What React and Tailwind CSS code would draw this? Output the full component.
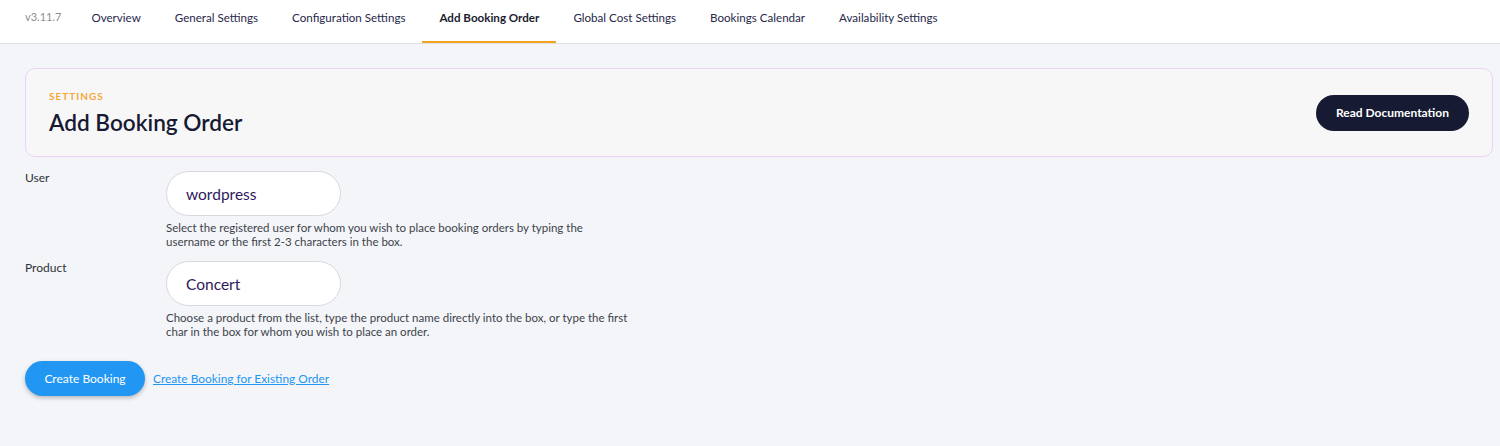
import React, { useState } from "react";

const tabs = [
  "Overview",
  "General Settings",
  "Configuration Settings",
  "Add Booking Order",
  "Global Cost Settings",
  "Bookings Calendar",
  "Availability Settings",
];

function Field({ label, value, help }) {
  const [val, setVal] = useState(value);
  return (
    <div className="flex">
      <div className="w-[141px] text-[12px] leading-[14px] text-[#2c3338]">{label}</div>
      <div className="flex flex-col">
        <input
          type="text"
          value={val}
          onChange={(e) => setVal(e.target.value)}
          className="w-[175px] h-[45px] rounded-full border border-[#d8d8de] bg-white px-[19px] text-[15.5px] text-[#2e1a5c] focus:outline-none"
        />
        <p className="mt-[5px] w-[465px] text-[11.5px] leading-[14px] text-[#3c434a]">{help}</p>
      </div>
    </div>
  );
}

export default function App() {
  const active = "Add Booking Order";

  return (
    <div className="min-h-[446px] bg-[#f4f5f9] font-['Lato',sans-serif]">
      <div className="flex h-[44px] items-stretch border-b border-[#e1e2e8] bg-white pl-[25px]">
        <span className="pt-[9px] pr-[13px] text-[11px] text-[#8c8f94]">v3.11.7</span>
        {tabs.map((t) => (
          <div
            key={t}
            className={
              t === active
                ? "border-b-2 border-[#f2a41f] px-[17px] pt-[9px] text-[11.6px] font-bold text-[#1b1c2e]"
                : "border-b-2 border-transparent px-[17px] pt-[9px] text-[11.6px] text-[#28284a]"
            }
          >
            {t}
          </div>
        ))}
      </div>

      <div className="pl-[25px] pr-[7px] pt-[24px]">
        <div className="flex h-[89px] items-center justify-between rounded-[10px] border border-[#ead3fb] bg-[#f7f7f8] pl-[23px] pr-[23px]">
          <div className="flex flex-col pt-[3px]">
            <span className="text-[10px] font-bold tracking-[1px] text-[#f4a739]">SETTINGS</span>
            <h1 className="mt-[2px] text-[22.6px] font-semibold text-[#171a33]">Add Booking Order</h1>
          </div>
          <button className="h-[36px] rounded-full bg-[#161a33] px-[20px] text-[12px] font-bold text-white">
            Read Documentation
          </button>
        </div>

        <div className="mt-[14px] flex flex-col gap-[12px]">
          <Field
            label="User"
            value="wordpress"
            help="Select the registered user for whom you wish to place booking orders by typing the username or the first 2-3 characters in the box."
          />
          <Field
            label="Product"
            value="Concert"
            help="Choose a product from the list, type the product name directly into the box, or type the first char in the box for whom you wish to place an order."
          />
        </div>

        <div className="mt-[22px] flex items-center gap-[8px]">
          <button className="h-[35px] w-[120px] rounded-full bg-[#2196f3] text-[12px] text-white shadow-[0_2px_4px_rgba(0,0,0,0.25)]">
            Create Booking
          </button>
          <a href="#" className="text-[11.9px] text-[#2196f3] underline">
            Create Booking for Existing Order
          </a>
        </div>
      </div>
    </div>
  );
}
